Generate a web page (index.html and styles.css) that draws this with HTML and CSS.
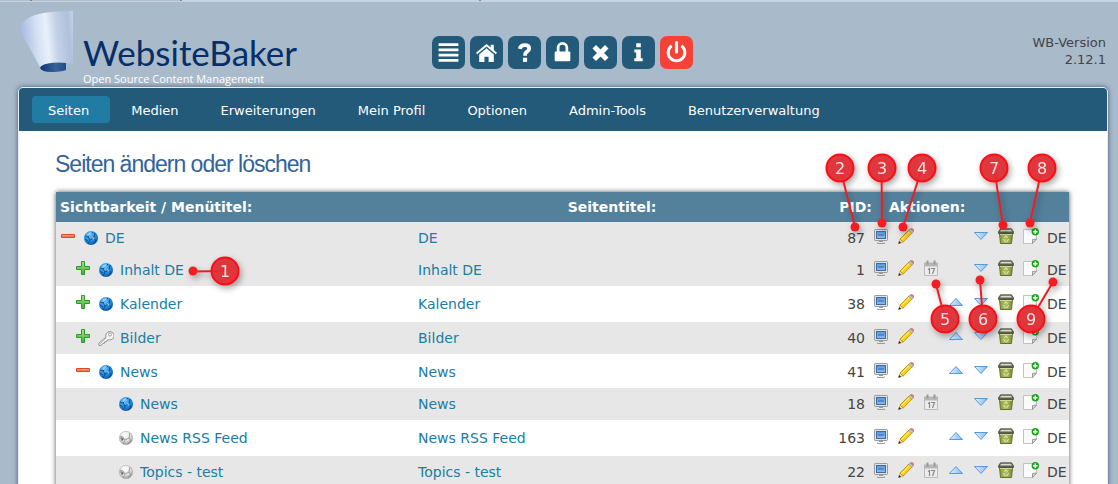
FILE: index.html
```html
<!DOCTYPE html>
<html lang="de">
<head>
<meta charset="utf-8">
<title>WebsiteBaker – Seiten</title>
<link rel="stylesheet" href="styles.css">
</head>
<body>
<svg class="defs" aria-hidden="true">
  <defs>
    <linearGradient id="hat" x1="0" x2="1" y1="0.1" y2="0"><stop offset="0" stop-color="#a5b9de"/><stop offset=".3" stop-color="#d5e1f3"/><stop offset=".48" stop-color="#e8f0fa"/><stop offset=".65" stop-color="#c5d2e8"/><stop offset=".88" stop-color="#b0c0dc"/><stop offset="1" stop-color="#c4d2e6"/></linearGradient>
    <linearGradient id="hatband" x1="0" x2="1"><stop offset="0" stop-color="#0d3472"/><stop offset=".6" stop-color="#3a5f9b"/><stop offset="1" stop-color="#214c8b"/></linearGradient>
    <linearGradient id="plusfill" x1="0" x2="0" y1="0" y2="1"><stop offset="0" stop-color="#a4e388"/><stop offset="1" stop-color="#3fb030"/></linearGradient>
    <linearGradient id="minusfill" x1="0" x2="0" y1="0" y2="1"><stop offset="0" stop-color="#ffb49a"/><stop offset="1" stop-color="#ec5a34"/></linearGradient>
    <radialGradient id="globefill" cx=".4" cy=".3" r=".7"><stop offset="0" stop-color="#7cc4f5"/><stop offset=".5" stop-color="#2a95e8"/><stop offset="1" stop-color="#0a5cae"/></radialGradient>
    <radialGradient id="greyfill" cx=".4" cy=".3" r=".7"><stop offset="0" stop-color="#fff"/><stop offset=".6" stop-color="#e6e6e6"/><stop offset="1" stop-color="#999"/></radialGradient>
    <linearGradient id="arrow" x1="0" x2="1"><stop offset="0" stop-color="#e4f2ff"/><stop offset="1" stop-color="#7db8f2"/></linearGradient>
    <linearGradient id="screenfill" x1="0" x2="0" y1="0" y2="1"><stop offset="0" stop-color="#5b97d8"/><stop offset="1" stop-color="#8cbcf0"/></linearGradient>
    <linearGradient id="bin" x1="0" x2="1"><stop offset="0" stop-color="#8a9a3c"/><stop offset=".5" stop-color="#b3c264"/><stop offset="1" stop-color="#7d8c34"/></linearGradient>
    <filter id="soft" x="-50%" y="-50%" width="200%" height="200%"><feDropShadow dx="2" dy="3" stdDeviation="3" flood-color="#000" flood-opacity=".35"/></filter>
    <symbol id="plus" viewBox="0 0 16 16"><path d="M6.5 1.5h3v5h5v3h-5v5h-3v-5h-5v-3h5z" fill="url(#plusfill)" stroke="#2f9a2b"/></symbol>
    <symbol id="minus" viewBox="0 0 16 16"><path d="M1.500 6.500h13v3h-13z" fill="url(#minusfill)" stroke="#dc4a2c"/></symbol>
    <symbol id="globe" viewBox="0 0 16 16"><circle cx="8" cy="8" r="7" fill="url(#globefill)"/><path d="M2 6l3 1 2 3-2 4M5 7l5-5M7 10l4-2 1-5M11 8l2 3-3 3M2 9l3 2" fill="none" stroke="#073d75" stroke-width=".8"/><path d="M4 4l4-2 1 2-3 2zM9 7l3 1-2 2z" fill="#9bd7fa" opacity=".8"/></symbol>
    <symbol id="grey" viewBox="0 0 16 16"><circle cx="8" cy="8" r="6.700" fill="url(#greyfill)" stroke="#aaa" stroke-width=".6"/><path d="M2 6l3 1 2 3-2 4M7 10l4-2 1-5M11 8l2 3-3 3M2 7l2 4" fill="none" stroke="#888" stroke-width=".8"/><path d="M3 7l3 2-2 2z" fill="#666"/></symbol>
    <symbol id="key" viewBox="0 0 16 16"><path d="M8 7.200a4.200 4.200 0 1 1 2.800 2.600l-1.500.2-.8 1.600-1.700.2-.5 1.600-1.700.2-1.500 1.900-2.300-.2v-2.200z" fill="#f2f2f2" stroke="#888" stroke-width=".9"/><circle cx="12" cy="4.500" r="1.500" fill="#fff" stroke="#888" stroke-width=".8"/><path d="M2 14l6-6" stroke="#aaa" stroke-width=".7"/></symbol>
    <symbol id="screen" viewBox="0 0 16 16"><rect x="1.500" y="1.500" width="13" height="11" rx=".8" fill="#e2e2e2" stroke="#999"/><rect x="3.500" y="3.500" width="9" height="7" fill="url(#screenfill)" stroke="#3a6da5"/><path d="M5 7h6" stroke="#2f69aa"/><path d="M6 13.500h4M4.500 14.500v1h7v-1" fill="none" stroke="#999" stroke-width="1"/></symbol>
    <symbol id="pencil" viewBox="0 0 16 16"><path d="M.8 15.300l1.200-4.300 3.200 3.100z" fill="#f4d8a4" stroke="#a98a55" stroke-width=".5"/><path d="M.3 15.800l.8-2.800 2 2z" fill="#222"/><path d="M2 11L11 2l3.100 3-8.900 9z" fill="#ffd012" stroke="#b98900" stroke-width=".8"/><path d="M3.300 11.800l8.500-8.500" stroke="#fff08a" stroke-width="1"/><path d="M10.700 2.300l1.500-1.400 3 3-1.500 1.400z" fill="#c9c9c9" stroke="#888" stroke-width=".6"/><path d="M12.500.8q1.500-.8 2.600.3t.4 2.500z" fill="#ef8880" stroke="#bd5550" stroke-width=".6"/></symbol>
    <symbol id="cal" viewBox="0 0 16 16"><path d="M1.500 3.500h13v12h-13z" fill="#ededed" stroke="#bbb"/><path d="M1 2.500h14v4H1z" fill="#b7b7b7"/><path d="M4.500.5v4M11.500.5v4" stroke="#999" stroke-width="2"/><path d="M5 9.500l1.500-1v5.500M8 8.500h3.500l-2 5.500" fill="none" stroke="#8a8a8a" stroke-width="1.200"/></symbol>
    <symbol id="down" viewBox="0 0 16 16"><path d="M1.500 4.500h13L8 11.500z" fill="url(#arrow)" stroke="#4f90d6" stroke-width=".9"/></symbol>
    <symbol id="up" viewBox="0 0 16 16"><path d="M1.500 11.500h13L8 4.500z" fill="url(#arrow)" stroke="#4f90d6" stroke-width=".9"/></symbol>
    <symbol id="trash" viewBox="0 0 16 16"><path d="M1.500 5.500h13l-1 10h-11z" fill="url(#bin)" stroke="#66702a"/><path d="M2.500.8h11l2 3v1.700H.5V3.800z" fill="#5b604c" stroke="#4b503e" stroke-width=".8"/><path d="M3 1.800h10l1 1.700H2z" fill="#d9dccd"/><path d="M2 6.500h12" stroke="#d0d89a"/><path d="M6.300 9.800l1.700-2 1.700 2M5.500 11l1 2.200h1M10.500 11l-1 2.200h-1" fill="none" stroke="#e2e9bb" stroke-width="1"/></symbol>
    <symbol id="add" viewBox="0 0 16 16"><path d="M.5 1.500h13V11l-4 4.500h-9z" fill="#fbfbfb" stroke="#c2c2c2"/><path d="M13.500 11l-4 .5v4z" fill="#ddd" stroke="#888" stroke-width=".8"/><circle cx="12.300" cy="3.700" r="3.700" fill="#18a818"/><path d="M12.300 1.500v4.400M10.100 3.700h4.400" stroke="#fff" stroke-width="1.500"/></symbol>
  </defs>
</svg>

<div class="tabstrip" aria-hidden="true"><i></i><i></i><i class="open"></i></div>
<header class="header">
  <div class="brand">
    <svg class="hat" viewBox="0 0 56 64" aria-hidden="true"><path d="M1 19Q4 9 17 5T55 1V54L48 53Q35 50 22 57Z" fill="url(#hat)"/><path d="M22 58Q24 52 48 53V60Q42 62 33 62T22 58Z" fill="url(#hatband)"/></svg>
    <div class="wordmark"><span class="name">WebsiteBaker</span><span class="claim">Open Source Content Management</span></div>
  </div>
  <nav class="tools" aria-label="Werkzeuge">
    <button type="button" aria-label="Menü"><svg viewBox="0 0 24 24"><path d="M2.500 4.500h19M2.500 9.500h19M2.500 14.500h19M2.500 19.500h19" stroke="#fff" stroke-width="2.600"/></svg></button>
    <button type="button" aria-label="Start"><svg viewBox="0 0 24 24"><path d="M12 8l7 6v7h-5v-5h-4v5H5v-7z" fill="#fff"/><path d="M2.500 13L12 5l9.500 8" fill="none" stroke="#fff" stroke-width="1.800"/><path d="M16 4.500h3V10l-3-2.500z" fill="#fff"/></svg></button>
    <button type="button" aria-label="Hilfe"><svg viewBox="0 0 24 24"><path d="M7.500 8.500q.8-3.500 4.700-3.500 4.300 0 4.300 3.200 0 1.800-2 3Q12.500 12.500 12.500 15" fill="none" stroke="#fff" stroke-width="3.600"/><path d="M10.500 17h4v4h-4z" fill="#fff"/></svg></button>
    <button type="button" aria-label="Sperren"><svg viewBox="0 0 24 24"><rect x="4.500" y="11" width="15" height="9.500" rx="1" fill="#fff"/><path d="M7.800 12V7.500a4.200 4.200 0 0 1 8.400 0V12" fill="none" stroke="#fff" stroke-width="2.600"/></svg></button>
    <button type="button" aria-label="Schließen"><svg viewBox="0 0 24 24"><path d="M6 6.500l12 12M18 6.500l-12 12" stroke="#fff" stroke-width="4.800"/></svg></button>
    <button type="button" aria-label="Info"><svg viewBox="0 0 24 24"><path d="M9.800 3h4.400v4H9.800zM8 9h6.200v8.500H16v3H8v-3h1.800V12H8z" fill="#fff"/></svg></button>
    <button type="button" class="power" aria-label="Abmelden"><svg viewBox="0 0 24 24"><path d="M7.300 5.500a8 8 0 1 0 9.400 0" fill="none" stroke="#fff" stroke-width="2.800"/><path d="M12 2.500v9" stroke="#fff" stroke-width="3" stroke-linecap="round"/></svg></button>
  </nav>
  <div class="version">WB-Version<br>2.12.1</div>
</header>

<main class="panel">
  <nav class="menu" aria-label="Hauptmenü">
    <a class="active" href="#">Seiten</a><a href="#">Medien</a><a href="#">Erweiterungen</a><a href="#">Mein Profil</a><a href="#">Optionen</a><a href="#">Admin-Tools</a><a href="#">Benutzerverwaltung</a>
  </nav>
  <div class="content">
    <h1>Seiten ändern oder löschen</h1>
    <div class="tree">
      <table>
        <colgroup><col class="c-menu"><col class="c-title"><col class="c-pid"><col class="c-icon" span="7"><col class="c-lang"></colgroup>
        <thead><tr><th class="left">Sichtbarkeit / Menütitel:</th><th>Seitentitel:</th><th class="right">PID:</th><th class="actions" colspan="8">Aktionen:</th></tr></thead>
        <tbody id="rows"></tbody>
      </table>
      <svg class="notes notes-left" width="80" height="60" role="img" aria-label="Hinweis 1">
        <g class="note"><path d="M8 30.500L40 30"/><circle class="dot" cx="8" cy="30" r="4.500"/><circle class="ball" cx="40" cy="30" r="13.500"/><text x="40" y="36">1</text></g>
      </svg>
      <svg class="notes notes-right" width="280" height="210" role="img" aria-label="Hinweise 2 bis 9">
        <g class="note"><path d="M30 28L45 87"/><circle class="dot" cx="45" cy="87" r="4.500"/><circle class="ball" cx="30" cy="28" r="13.500"/><text x="30" y="34">2</text></g>
        <g class="note"><path d="M71.500 28L72 83"/><circle class="dot" cx="72" cy="83" r="4.500"/><circle class="ball" cx="72" cy="28" r="13.500"/><text x="72" y="34">3</text></g>
        <g class="note"><path d="M112 28L93 87"/><circle class="dot" cx="93" cy="87" r="4.500"/><circle class="ball" cx="112" cy="28" r="13.500"/><text x="112" y="34">4</text></g>
        <g class="note"><path d="M184 28L193 85"/><circle class="dot" cx="193" cy="85" r="4.500"/><circle class="ball" cx="184" cy="28" r="13.500"/><text x="184" y="34">7</text></g>
        <g class="note"><path d="M232 28L220 83"/><circle class="dot" cx="220" cy="83" r="4.500"/><circle class="ball" cx="232" cy="28" r="13.500"/><text x="232" y="34">8</text></g>
        <g class="note"><path d="M135 179L126 144"/><circle class="dot" cx="126" cy="144" r="4.500"/><circle class="ball" cx="135" cy="179" r="13.500"/><text x="135" y="185">5</text></g>
        <g class="note"><path d="M173 179L170 140"/><circle class="dot" cx="170" cy="140" r="4.500"/><circle class="ball" cx="173" cy="179" r="13.500"/><text x="173" y="185">6</text></g>
        <g class="note"><path d="M221 179L243 142"/><circle class="dot" cx="243" cy="142" r="4.500"/><circle class="ball" cx="221" cy="179" r="13.500"/><text x="221" y="185">9</text></g>
      </svg>
    </div>
  </div>
</main>
<script src="app.js"></script>
</body>
</html>
```
FILE: styles.css
```css
* { box-sizing: border-box; }
html { height: 100%; overflow: hidden; }
body { margin: 0; background: #a9bacb; font-family: Verdana, "DejaVu Sans", sans-serif; font-size: 14px; color: #444; }
a { color: #207ca2; text-decoration: none; }
.defs { position: absolute; width: 0; height: 0; }
.tabstrip { display: flex; height: 2px; background: #c4d2e2; }
.tabstrip i { width: 150px; border-right: 2px solid #7d8893; height: 1px; background: #b4c0cc; }
.tabstrip i:first-child { width: 32px; }
.tabstrip .open { width: 299px; background: #c4d2e2; }
.header { display: grid; grid-template-columns: 1fr auto 1fr; height: 85px; padding: 8px 12px 0 18px; }
.brand { display: flex; }
.hat { width: 56px; height: 64px; flex: none; }
.wordmark { display: flex; flex-direction: column; padding: 22px 0 0 9px; }
.name { font: 35px/40px Lato, sans-serif; color: #052f66; }
.claim { font: 11px/14px "Open Sans", sans-serif; color: #fff; white-space: nowrap; }
.tools { display: flex; gap: 5px; padding-top: 26px; }
.tools button { width: 33px; height: 33px; padding: 4px; border: 0; border-radius: 7px; background: #235a7a; }
.tools svg { display: block; width: 25px; height: 25px; }
.tools .power { background: #f44336; }
.version { text-align: right; font-size: 13px; line-height: 17px; padding-top: 24px; color: #444; }
.panel { margin: 0 10px 0 18px; border: 1px solid #e6eef4; border-radius: 5px 5px 0 0; background: #fff; box-shadow: 0 0 5px #456; overflow: hidden; }
.menu { display: flex; gap: 5px; height: 43px; padding: 8px 13px; background: #235a7a; }
.menu a { padding: 1px 21px 0 16px; border-radius: 4px; color: #fff; font-size: 13px; line-height: 28px; }
.menu .active { background: #207ca2; }
.content { padding: 16px 38px 0 36px; }
h1 { margin: 0 0 11px; font: 23px/34px "Liberation Sans", Arial, sans-serif; letter-spacing: -1px; color: #33639c; }
.tree { position: relative; margin-left: 1px; }
table { width: 100%; border-collapse: collapse; table-layout: fixed; box-shadow: 0 0 5px #555; }
th { height: 30px; padding: 0; background: #53809a; color: #fff; font-size: 14px; }
td { height: 32px; padding: 0; }
.left { text-align: left; padding-left: 4px; }
.right { text-align: right; }
.actions { text-align: left; padding-left: 17px; }
.c-menu { width: 362px; }
.c-pid { width: 66px; }
.c-icon { width: 25px; }
.c-lang { width: 22px; }
tbody tr { background: #e7e7e7; }
tbody .light { background: #fff; }
.light td { height: 36px; }
.light.parent td { height: 34px; padding-top: 2px; }
.item { display: flex; align-items: center; }
.item svg { margin-right: 6px; }
.item .toggle { margin: 0 7px 4px 0; }
.lv0 { padding-left: 4px; }
.lv1 { padding-left: 19px; }
.lv2 { padding-left: 62px; }
.pid { text-align: right; padding-right: 7px; }
.ico { padding-left: 1px; }
td svg { display: block; width: 16px; height: 16px; flex: none; }
.ico button { display: block; padding: 0 0 4px; border: 0; background: none; }
.notes { position: absolute; pointer-events: none; }
.notes-left { left: 129px; top: 49px; }
.notes-right { right: -21px; top: -52px; }
.note { filter: url(#soft); }
.note path { stroke: #ee1c22; stroke-width: 2; }
.dot { fill: #f41f24; }
.ball { fill: #e03035; fill-opacity: .95; stroke: #fa1018; stroke-width: 2; }
.note text { fill: #fbe3e3; font: 16px "DejaVu Sans", sans-serif; text-anchor: middle; }
```
FILE: app.js
```js
const pages = [
  { level: 0, toggle: "minus", icon: "globe", name: "DE", pid: 87, actions: ["screen", "pencil", "", "", "down", "trash", "add"] },
  { level: 1, toggle: "plus", icon: "globe", name: "Inhalt DE", pid: 1, actions: ["screen", "pencil", "cal", "", "down", "trash", "add"] },
  { level: 1, toggle: "plus", icon: "globe", name: "Kalender", pid: 38, actions: ["screen", "pencil", "", "up", "down", "trash", "add"], row: "light" },
  { level: 1, toggle: "plus", icon: "key", name: "Bilder", pid: 40, actions: ["screen", "pencil", "", "up", "down", "trash", "add"] },
  { level: 1, toggle: "minus", icon: "globe", name: "News", pid: 41, actions: ["screen", "pencil", "", "up", "down", "trash", "add"], row: "light parent" },
  { level: 2, icon: "globe", name: "News", pid: 18, actions: ["screen", "pencil", "cal", "", "down", "trash", "add"] },
  { level: 2, icon: "grey", name: "News RSS Feed", pid: 163, actions: ["screen", "pencil", "", "up", "down", "trash", "add"], row: "light" },
  { level: 2, icon: "grey", name: "Topics - test", pid: 22, actions: ["screen", "pencil", "cal", "up", "down", "trash", "add"] }
];
const svg = (id, cls = "") => `<svg class="${cls}" aria-hidden="true"><use href="#${id}"/></svg>`;
document.getElementById("rows").innerHTML = pages.map(p => `<tr class="${p.row || ""}">
  <td><div class="item lv${p.level}">${p.toggle ? svg(p.toggle, "toggle") : ""}${svg(p.icon)}<a href="#">${p.name}</a></div></td>
  <td><a href="#">${p.name}</a></td><td class="pid">${p.pid}</td>
  ${p.actions.map(a => `<td class="ico">${a ? `<button type="button" aria-label="${a}">${svg(a)}</button>` : ""}</td>`).join("")}
  <td>DE</td></tr>`).join("");
```
